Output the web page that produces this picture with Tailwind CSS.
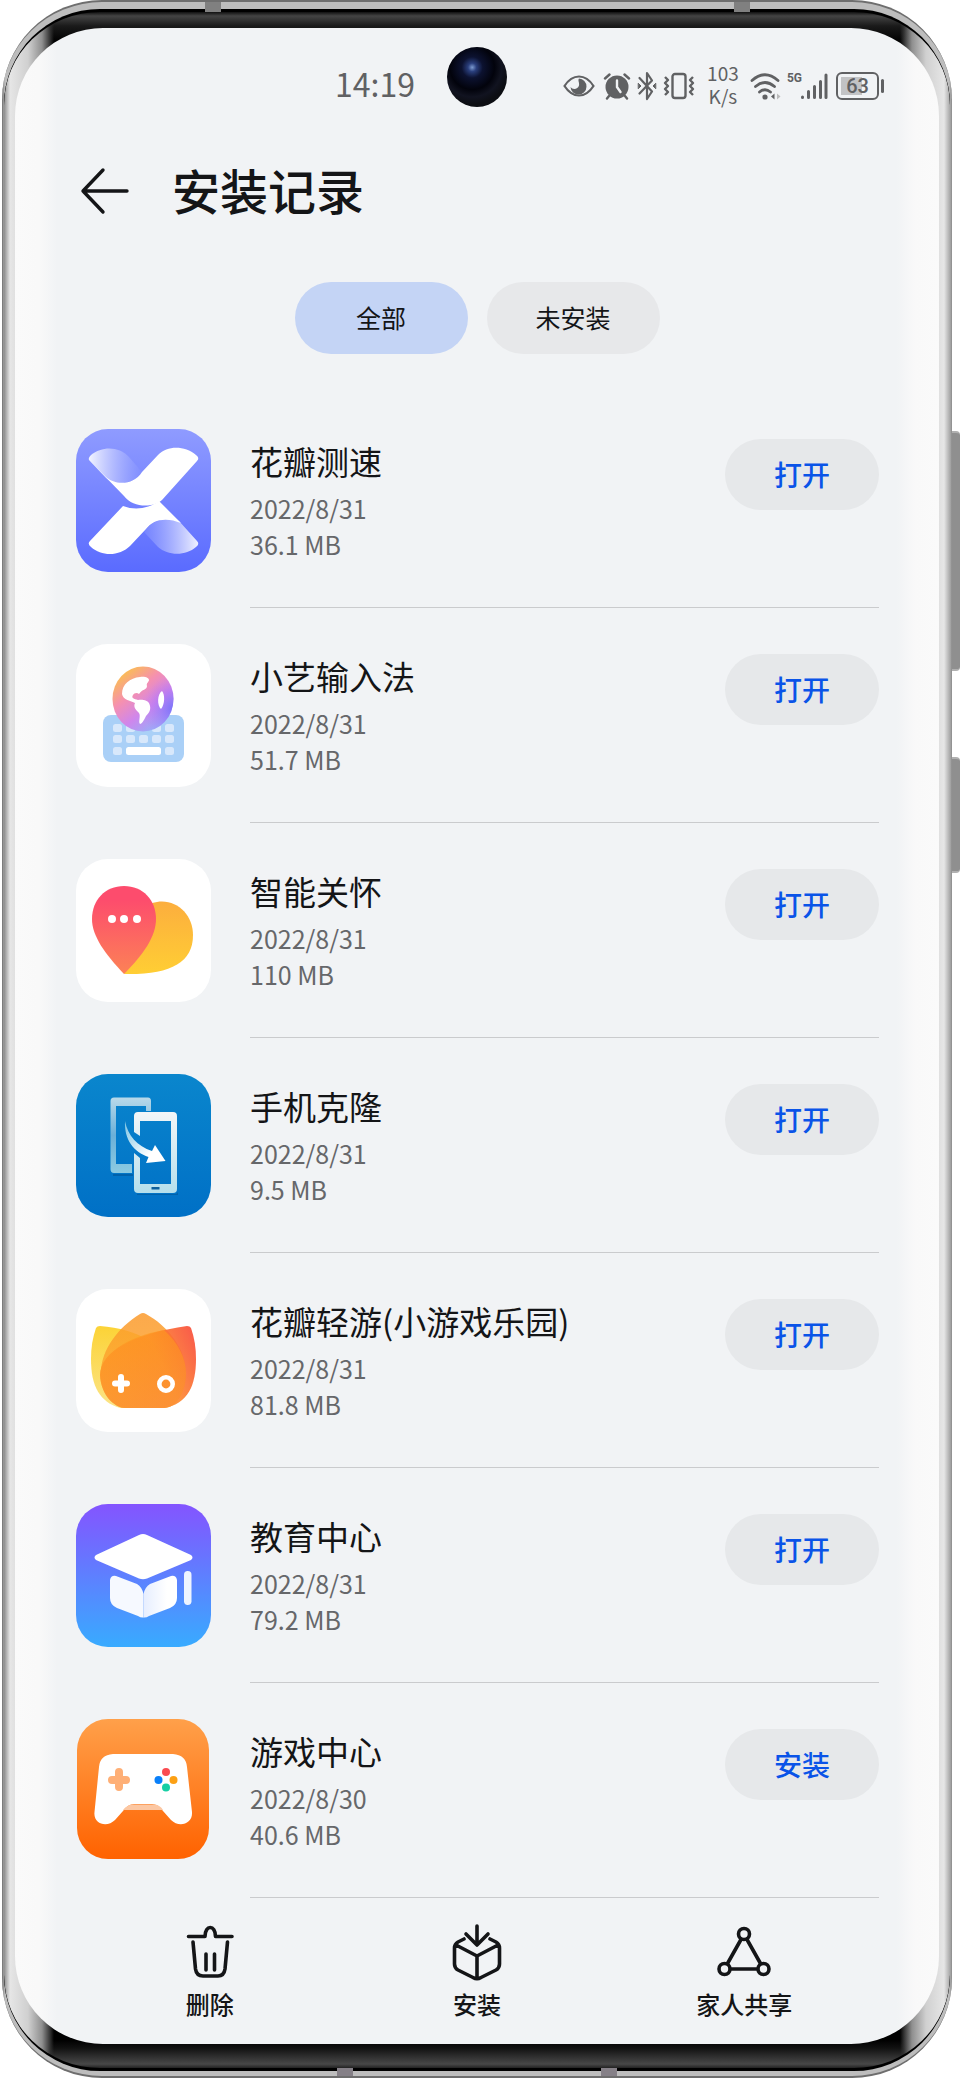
<!DOCTYPE html>
<html lang="zh-CN">
<head>
  <meta charset="utf-8" />
  <meta name="viewport" content="width=device-width, initial-scale=1" />
  <title>安装记录</title>
  <script src="https://cdn.jsdelivr.net/npm/@tailwindcss/browser@4"></script>
  <style>
    body {
      font-family: 'Noto Sans CJK SC', sans-serif;
    }
  </style>
</head>
<body class="bg-white text-[#141517]">

  <!-- Phone body -->
  <div class="relative ml-[2px] mr-[9px]">
    <!-- Side keys -->
    <div class="absolute top-[431px] -right-2 h-[240px] w-3 rounded-sm border-y-2 border-[#b0b0b0] bg-[#8f8f8f]"></div>
    <div class="absolute top-[757px] -right-2 h-[116px] w-3 rounded-sm border-y-2 border-[#b0b0b0] bg-[#8f8f8f]"></div>

    <div class="relative overflow-hidden rounded-[100px] border-y-2 border-[#6e6e6e] bg-[linear-gradient(to_right,#6f6f6f_0,#bdbdbd_3px,#bdbdbd_calc(100%-3px),#8a8a8a_100%)] px-[2px] pt-[7px] pb-[5px]">
      <!-- Antenna lines -->
      <div class="absolute top-0 left-[203px] h-2.5 w-4 bg-[#808080]"></div>
      <div class="absolute top-0 right-[202px] h-2.5 w-4 bg-[#808080]"></div>
      <div class="absolute bottom-0 left-[335px] h-2 w-4 bg-[#858087]"></div>
      <div class="absolute bottom-0 right-[335px] h-2 w-4 bg-[#858087]"></div>

      <div class="rounded-[96px] border-y-3 border-black bg-[linear-gradient(to_right,#8d8d8d_0,#e6e6e6_6px,#d0d0d0_24px,#8f8f8f_38px,#333_46px,transparent_50px,transparent_calc(100%-50px),#333_calc(100%-46px),#8f8f8f_calc(100%-38px),#d0d0d0_calc(100%-24px),#e6e6e6_calc(100%-6px),#a8a8a8_100%),linear-gradient(to_bottom,#111_0,#444_4px,#1a1a1a_14px,#000_30px,#000_calc(100%-28px),#111_calc(100%-20px),#484848_calc(100%-4px),#222_100%)] px-[11px] pt-[16px] pb-[24px]">

        <!-- Screen -->
        <div class="rounded-[88px] bg-[linear-gradient(to_right,#fafafa_0,#f9f9f9_24px,#f1f3f5_42px,#f1f3f5_calc(100%-42px),#f9f9f9_calc(100%-24px),#fafafa_100%)]">

          <!-- Status bar -->
          <div class="grid h-[116px] grid-cols-[1fr_60px_1fr] items-center text-[#606163]">
            <time class="pr-8 pb-1.5 text-right text-[32px] leading-10">14:19</time>
            <div class="mt-[19px] size-[60px] self-start rounded-full bg-[radial-gradient(circle_at_42%_34%,#7d9bd0_0,#2a3f7d_8%,#0c1230_20%,#02030c_42%,#111320_56%,#0c0d12_70%)]"></div>
            <div class="flex items-center justify-end pr-[55px]">
              <svg class="mr-2 h-6 w-8" viewBox="0 0 32 24" fill="none" stroke="currentColor" stroke-width="2.2">
                <path d="M1.500 12C6 5 11 2.500 16 2.500S26 5 30.500 12C26 19 21 21.500 16 21.500S6 19 1.500 12Z" />
                <path d="M16 4.500a8 8 0 1 1-8.500 8.500c2 3 7.500 2.500 8.500-1.500.7-3-1.500-5 0-7Z" fill="currentColor" stroke="none" />
              </svg>
              <svg class="mr-1.5 h-7 w-7" viewBox="0 0 28 28" fill="none" stroke="currentColor" stroke-width="2.400" stroke-linecap="round">
                <circle cx="14" cy="15" r="11.500" fill="currentColor" stroke="none" />
                <path d="M2 6.500 6.500 2.500M26 6.500l-4.500-4M6 24l-2 2.500M22 24l2 2.500" />
                <path d="M14 8.500V15l3.500 5" stroke="#f1f3f5" />
              </svg>
              <svg class="mr-1.5 h-[30px] w-5" viewBox="0 0 20 30" fill="none" stroke="currentColor" stroke-width="2.200" stroke-linejoin="round" stroke-linecap="round">
                <path d="M2.500 7 15 20.500 10 28V2l5 7.500L2.500 22.500" />
                <path d="M1.500 12.500 4 15l-2.500 2.500ZM18.500 12.500 16 15l2.500 2.500Z" fill="currentColor" stroke-width="1" />
              </svg>
              <svg class="mr-2.5 h-7 w-8" viewBox="0 0 32 28" fill="none" stroke="currentColor" stroke-width="2.400" stroke-linejoin="round">
                <rect x="9.500" y="2" width="13" height="24" rx="2.500" />
                <path d="m2 5 3 3-3 3 3 3-3 3 3 3-3 3M30 5l-3 3 3 3-3 3 3 3-3 3 3 3" />
              </svg>
              <div class="mr-2 w-9 pb-1 text-center text-[19px] leading-[23px]">
                <div>103</div>
                <div>K/s</div>
              </div>
              <svg class="mr-1.5 h-7 w-8" viewBox="0 0 32 28" fill="none" stroke="currentColor" stroke-width="2.800" stroke-linecap="round">
                <path d="M3 8.500Q16-3 29 8.500M6.500 14.500q9.500-8 19 0M10.500 20q5.500-4.500 11 0" />
                <circle cx="16" cy="25" r="2.600" fill="currentColor" stroke="none" />
                <path d="m25.500 21.500-3.500 3 3.500 3Z" fill="currentColor" stroke="none" />
                <path d="m28 21.500 3.500 3-3.500 3Z" fill="#bbb" stroke="none" />
              </svg>
              <span class="-mr-0.5 mb-4 font-[Roboto] text-[12px] leading-4 font-bold">5G</span>
              <svg class="mr-2 h-7 w-7" viewBox="0 0 28 28" stroke="currentColor" stroke-width="3" stroke-linecap="round">
                <path d="M2.500 25.500v-.5M8.500 25.500v-6M14.500 25.500v-11M20.500 25.500v-16M26 25.500V3" />
              </svg>
              <div class="mr-0.5 flex h-7 w-[43px] items-center justify-center rounded-md border-2 border-current bg-[linear-gradient(to_right,transparent_3px,#c2c3c5_3px,#c2c3c5_24px,transparent_24px)] bg-clip-content py-[3px] font-[Roboto] text-[20px] leading-none font-medium">63</div>
              <div class="h-3.5 w-[3px] rounded-sm bg-current"></div>
            </div>
          </div>

          <!-- Title -->
          <header class="flex h-[94px] items-center px-16">
            <button type="button" aria-label="返回" class="mr-[43px]">
              <svg class="h-12 w-[50px]" viewBox="0 0 50 48" fill="none" stroke="currentColor" stroke-width="3.400" stroke-linecap="round" stroke-linejoin="round">
                <path d="M48 24H4M24 3 4 24l20 21" />
              </svg>
            </button>
            <h1 class="pb-1 text-[48px] leading-[60px] font-medium">安装记录</h1>
          </header>

          <!-- Filter -->
          <div class="mt-11 mb-[39px] flex justify-center gap-[19px] text-[25px] leading-9">
            <button type="button" class="h-[72px] w-[173px] rounded-full bg-[#c4d4f5] pb-0.5">全部</button>
            <button type="button" class="h-[72px] w-[173px] rounded-full bg-[#e7e8ea] pb-0.5">未安装</button>
          </div>

          <!-- App list -->
          <ul class="pr-[60px] pl-[61px]">
            <li class="flex gap-[39px]">
              <svg class="mt-9 h-[143px] w-[135px] shrink-0 rounded-[32px]" viewBox="0 0 135 143">
                <defs>
                  <linearGradient id="speedBg" x2="0" y2="1"><stop stop-color="#8f9bff" /><stop offset="1" stop-color="#5a6bff" /></linearGradient>
                  <linearGradient id="speedFoldA"><stop stop-color="#fff" stop-opacity=".9" /><stop offset="1" stop-color="#8290ff" stop-opacity=".5" /></linearGradient>
                  <linearGradient id="speedFoldB"><stop stop-color="#8290ff" stop-opacity=".5" /><stop offset="1" stop-color="#fff" stop-opacity=".9" /></linearGradient>
                </defs>
                <path fill="url(#speedBg)" d="M0 0h135v143H0z" />
                <path fill="url(#speedFoldA)" d="M13 31Q12 29 15 26C26 17 43 17 53 28L66 43C58 56 38 57 30 49Z" />
                <path fill="#fff" d="M13 31 30 48C39 56 57 57 66 43L82 26C92 16 109 17 120 26Q124 29 121 32L86 71C77 79 57 79 48 67Z" />
                <path fill="url(#speedFoldB)" d="M68 103 82 118C92 127 110 127 120 118Q124 115 121 112L103 92C90 88 76 90 68 103Z" />
                <path fill="#fff" d="M47 77C60 82 73 79 83 72L105 94C91 88 77 90 70 100L54 117C44 127 26 128 15 118Q11 115 14 112Z" />
              </svg>
              <div class="flex h-[215px] flex-1 items-start justify-between border-b border-[#cacbcd]">
                <div class="pt-[45px]">
                  <h2 class="mb-1.5 text-[33px] leading-[46px]">花瓣测速</h2>
                  <p class="text-[25px] leading-9 text-[#66676a]">2022/8/31</p>
                  <p class="text-[25px] leading-9 text-[#66676a]">36.1 MB</p>
                </div>
                <button type="button" class="mt-[46px] h-[71px] w-[154px] rounded-full bg-[#e6e8ea] pb-0.5 text-[28px] leading-10 font-medium text-[#0a54e8]">打开</button>
              </div>
            </li>

            <li class="flex gap-[39px]">
              <svg class="mt-9 h-[143px] w-[135px] shrink-0 rounded-[32px]" viewBox="0 0 135 143">
                <defs>
                  <linearGradient id="globeBase" x1=".1" y1=".1" x2=".75" y2="1"><stop stop-color="#fbc24a" /><stop offset=".35" stop-color="#f590b0" /><stop offset=".65" stop-color="#cf86ec" /><stop offset="1" stop-color="#8fb4fb" /></linearGradient>
                  <radialGradient id="globeEdge" cx="1" cy=".65" r=".5"><stop stop-color="#7a72fa" /><stop offset="1" stop-color="#c06ff5" stop-opacity="0" /></radialGradient>
                </defs>
                <path fill="#fff" d="M0 0h135v143H0z" />
                <rect x="27" y="71" width="81" height="47" rx="8" fill="#aad0f7" />
                <g fill="#d8e8fb">
                  <rect x="37" y="80" width="9" height="8" rx="2.500" /><rect x="50" y="80" width="9" height="8" rx="2.500" /><rect x="76" y="80" width="9" height="8" rx="2.500" /><rect x="89" y="80" width="9" height="8" rx="2.500" />
                  <rect x="37" y="91" width="9" height="8" rx="2.500" /><rect x="50" y="91" width="9" height="8" rx="2.500" /><rect x="63" y="91" width="9" height="8" rx="2.500" /><rect x="76" y="91" width="9" height="8" rx="2.500" /><rect x="89" y="91" width="9" height="8" rx="2.500" />
                  <rect x="37" y="103" width="9" height="8" rx="2.500" /><rect x="89" y="103" width="9" height="8" rx="2.500" />
                </g>
                <rect x="50" y="103" width="35" height="8" rx="2.500" fill="#fff" />
                <ellipse cx="67" cy="55" rx="30.500" ry="32.500" fill="url(#globeBase)" />
                <ellipse cx="67" cy="55" rx="30.500" ry="32.500" fill="url(#globeEdge)" />
                <path fill="#fff" d="M46 50C46 40 54 34 64 33C69 32 73 34 73 36C73 38 70 39 71 42C71 46 66 45 63 50C61 48 58 49 57 51C55 54 58 55 62 56C67 55 72 57 73 59C76 65 73 69 70 72C68 76 66 80 64 80C62 78 65 72 63 69C60 66 57 63 59 59C55 57 47 56 46 50Z" />
                <path fill="#fff" d="M86 47C89 50 89 60 85 65C81 62 81 50 86 47Z" />
              </svg>
              <div class="flex h-[215px] flex-1 items-start justify-between border-b border-[#cacbcd]">
                <div class="pt-[45px]">
                  <h2 class="mb-1.5 text-[33px] leading-[46px]">小艺输入法</h2>
                  <p class="text-[25px] leading-9 text-[#66676a]">2022/8/31</p>
                  <p class="text-[25px] leading-9 text-[#66676a]">51.7 MB</p>
                </div>
                <button type="button" class="mt-[46px] h-[71px] w-[154px] rounded-full bg-[#e6e8ea] pb-0.5 text-[28px] leading-10 font-medium text-[#0a54e8]">打开</button>
              </div>
            </li>

            <li class="flex gap-[39px]">
              <svg class="mt-9 h-[143px] w-[135px] shrink-0 rounded-[32px]" viewBox="0 0 135 143">
                <defs>
                  <linearGradient id="carePin" x2="0" y2="1"><stop offset=".15" stop-color="#fd4c6d" /><stop offset="1" stop-color="#fc8256" /></linearGradient>
                  <linearGradient id="careLeaf" x2="0" y2="1"><stop stop-color="#fcae3e" /><stop offset="1" stop-color="#ffce34" /></linearGradient>
                </defs>
                <path fill="#fff" d="M0 0h135v143H0z" />
                <path fill="url(#careLeaf)" d="M76 44C98 37 117 54 117 76C117 104 94 116 48 115Z" />
                <path fill="url(#carePin)" d="M48 27C67 27 80 41 80 60C80 77 68 95 48 115C29 95 16 77 16 60C16 41 29 27 48 27Z" />
                <g fill="#fff"><circle cx="36" cy="60" r="4" /><circle cx="48" cy="60" r="4" /><circle cx="61" cy="60" r="4" /></g>
              </svg>
              <div class="flex h-[215px] flex-1 items-start justify-between border-b border-[#cacbcd]">
                <div class="pt-[45px]">
                  <h2 class="mb-1.5 text-[33px] leading-[46px]">智能关怀</h2>
                  <p class="text-[25px] leading-9 text-[#66676a]">2022/8/31</p>
                  <p class="text-[25px] leading-9 text-[#66676a]">110 MB</p>
                </div>
                <button type="button" class="mt-[46px] h-[71px] w-[154px] rounded-full bg-[#e6e8ea] pb-0.5 text-[28px] leading-10 font-medium text-[#0a54e8]">打开</button>
              </div>
            </li>

            <li class="flex gap-[39px]">
              <svg class="mt-9 h-[143px] w-[135px] shrink-0 rounded-[32px]" viewBox="0 0 135 143">
                <defs>
                  <linearGradient id="cloneBg" x2="0" y2="1"><stop stop-color="#0a86cd" /><stop offset="1" stop-color="#0070c6" /></linearGradient>
                  <linearGradient id="cloneBack" x2="0" y2="1"><stop stop-color="#b9d9ea" /><stop offset=".5" stop-color="#6bb0d8" /><stop offset="1" stop-color="#8ccbe2" /></linearGradient>
                  <linearGradient id="cloneFront" x2="0" y2="1"><stop stop-color="#f3f6f8" /><stop offset="1" stop-color="#b5dfec" /></linearGradient>
                  <linearGradient id="cloneArrow" x2="1" y2="1"><stop stop-color="#7cc4e4" /><stop offset=".7" stop-color="#fff" /></linearGradient>
                </defs>
                <path fill="url(#cloneBg)" d="M0 0h135v143H0z" />
                <path fill="#00457f" opacity=".4" d="M37 100h20v2H37zM61 120h38q3 0 3-3v4h-41z" />
                <path fill="url(#cloneBack)" d="M38 23.500H72Q75 23.500 75 27V37H70V32H40V90H56V99H38Q34.500 99 34.500 95V27Q34.500 23.500 38 23.500Z" />
                <path fill="url(#cloneFront)" fill-rule="evenodd" d="M62 38H97Q101 38 101 42V115Q101 119 97 119H62Q58 119 58 115V79L64 84V110H95V47H64V62L58 58V42Q58 38 62 38Z" />
                <path fill="#0d5f9c" d="M75.500 113h8v2.500h-8z" />
                <path fill="url(#cloneArrow)" d="M49 47C52 62 61 72 76 77L79 71 89.500 87 70 89 72.500 83C58 78 48 66 49 47Z" />
              </svg>
              <div class="flex h-[215px] flex-1 items-start justify-between border-b border-[#cacbcd]">
                <div class="pt-[45px]">
                  <h2 class="mb-1.5 text-[33px] leading-[46px]">手机克隆</h2>
                  <p class="text-[25px] leading-9 text-[#66676a]">2022/8/31</p>
                  <p class="text-[25px] leading-9 text-[#66676a]">9.5 MB</p>
                </div>
                <button type="button" class="mt-[46px] h-[71px] w-[154px] rounded-full bg-[#e6e8ea] pb-0.5 text-[28px] leading-10 font-medium text-[#0a54e8]">打开</button>
              </div>
            </li>

            <li class="flex gap-[39px]">
              <svg class="mt-9 h-[143px] w-[135px] shrink-0 rounded-[32px]" viewBox="0 0 135 143">
                <defs>
                  <linearGradient id="petalL" x2="0" y2="1"><stop stop-color="#fcd336" /><stop offset="1" stop-color="#fbe488" /></linearGradient>
                  <linearGradient id="petalR" x1="1" x2="0" y1=".2" y2=".6"><stop stop-color="#f9523a" /><stop offset=".4" stop-color="#fd8a30" /><stop offset="1" stop-color="#fe9c28" /></linearGradient>
                  <linearGradient id="petalM" x2="0" y2="1"><stop stop-color="#fb9a2c" /><stop offset="1" stop-color="#fdae30" /></linearGradient>
                  <linearGradient id="petalMix" x2="0" y2="1"><stop stop-color="#fe9a1c" /><stop offset="1" stop-color="#fb9238" /></linearGradient>
                </defs>
                <path fill="#fff" d="M0 0h135v143H0z" />
                <path fill="url(#petalL)" d="M20 39Q21 37 24 37C62 40 92 56 100 88L70 119H44C24 113 15 98 15 70Q15 53 20 39Z" />
                <path fill="url(#petalM)" fill-opacity=".85" d="M64 25Q67 23 70 25C92 37 110 60 110 84C110 103 100 119 88 119H48C36 117 24 102 25 84C25 60 43 38 64 25Z" />
                <path fill="url(#petalR)" fill-opacity=".92" d="M115 39Q114 37 111 37C60 44 24 62 24 86C25 106 38 119 50 119H88C112 115 120 96 120 70Q120 53 115 39Z" />
                <path fill="url(#petalMix)" fill-opacity=".6" d="M24 86C25 66 49 48 88 41C102 54 110 69 110 84C110 103 100 119 88 119H50C38 119 25 106 24 86Z" />
                <path stroke="#fff" stroke-width="6" stroke-linecap="round" d="M39 94.500H51M45 88v13" />
                <circle cx="90" cy="95" r="6.700" fill="none" stroke="#fff" stroke-width="4.600" />
              </svg>
              <div class="flex h-[215px] flex-1 items-start justify-between border-b border-[#cacbcd]">
                <div class="pt-[45px]">
                  <h2 class="mb-1.5 text-[33px] leading-[46px]">花瓣轻游(小游戏乐园)</h2>
                  <p class="text-[25px] leading-9 text-[#66676a]">2022/8/31</p>
                  <p class="text-[25px] leading-9 text-[#66676a]">81.8 MB</p>
                </div>
                <button type="button" class="mt-[46px] h-[71px] w-[154px] rounded-full bg-[#e6e8ea] pb-0.5 text-[28px] leading-10 font-medium text-[#0a54e8]">打开</button>
              </div>
            </li>

            <li class="flex gap-[39px]">
              <svg class="mt-9 h-[143px] w-[135px] shrink-0 rounded-[32px]" viewBox="0 0 135 143">
                <defs>
                  <linearGradient id="eduBg" x2="0" y2="1"><stop stop-color="#8454ff" /><stop offset="1" stop-color="#38abff" /></linearGradient>
                  <linearGradient id="eduBook"><stop stop-color="#e6eeff" /><stop offset=".7" stop-color="#fff" /></linearGradient>
                </defs>
                <path fill="url(#eduBg)" d="M0 0h135v143H0z" />
                <path fill="#fff" d="M63 31Q67 29 71 31L115 51Q118 53.500 115 56L71 74.500Q67 76 63 74.500L20 56Q17 53.500 20 51Z" />
                <path fill="#f6f9ff" d="M34 76Q35 71 40 72L61 80Q66 83 67.500 90V113.500Q65 114 62 112L41 104Q34 101 34 94Z" />
                <path fill="url(#eduBook)" d="M101 76Q100 71 95 72L74 80Q69 83 67.500 90V113.500Q70 114 73 112L94 104Q101 101 101 94Z" />
                <rect x="108" y="67" width="7.500" height="34" rx="3.700" fill="#eef4ff" />
              </svg>
              <div class="flex h-[215px] flex-1 items-start justify-between border-b border-[#cacbcd]">
                <div class="pt-[45px]">
                  <h2 class="mb-1.5 text-[33px] leading-[46px]">教育中心</h2>
                  <p class="text-[25px] leading-9 text-[#66676a]">2022/8/31</p>
                  <p class="text-[25px] leading-9 text-[#66676a]">79.2 MB</p>
                </div>
                <button type="button" class="mt-[46px] h-[71px] w-[154px] rounded-full bg-[#e6e8ea] pb-0.5 text-[28px] leading-10 font-medium text-[#0a54e8]">打开</button>
              </div>
            </li>

            <li class="flex gap-[39px]">
              <svg class="mt-9 h-[143px] w-[135px] shrink-0" viewBox="0 0 135 143">
                <defs>
                  <linearGradient id="gameBg" x2="0" y2="1"><stop stop-color="#ffa04a" /><stop offset="1" stop-color="#ff6200" /></linearGradient>
                </defs>
                <rect x="1" width="132" height="140" rx="31" fill="url(#gameBg)" />
                <path fill="#fff" d="M37 35H97Q110 36 111 48L116 93C117 105 103 109 95 101L87 92Q82 85 76 85H58Q52 85 47 92L39 101C31 109 17 105 18.500 93L23 48Q24 36 37 35Z" />
                <path fill="#fcc7a2" d="M56 85.500H79Q84 86 87 91H47Q51 86 56 85.500Z" />
                <path stroke="#feaf76" stroke-width="8" stroke-linecap="round" d="M36 61H50M43 53v15" />
                <circle cx="90" cy="53" r="4" fill="#fa4b50" /><circle cx="82.500" cy="61" r="4" fill="#0a80fa" /><circle cx="97.500" cy="61" r="4" fill="#fca014" /><circle cx="90" cy="68.500" r="4" fill="#17cfa4" />
              </svg>
              <div class="flex h-[215px] flex-1 items-start justify-between border-b border-[#cacbcd]">
                <div class="pt-[45px]">
                  <h2 class="mb-1.5 text-[33px] leading-[46px]">游戏中心</h2>
                  <p class="text-[25px] leading-9 text-[#66676a]">2022/8/30</p>
                  <p class="text-[25px] leading-9 text-[#66676a]">40.6 MB</p>
                </div>
                <button type="button" class="mt-[46px] h-[71px] w-[154px] rounded-full bg-[#e6e8ea] pb-0.5 text-[28px] leading-10 font-medium text-[#0a54e8]">安装</button>
              </div>
            </li>
          </ul>

          <!-- Bottom actions -->
          <nav class="grid h-[146px] grid-cols-3 px-[61px] pt-6 text-[24px] leading-8 font-medium">
            <button type="button" class="flex flex-col items-center gap-1.5">
              <svg class="h-[60px] w-14" viewBox="0 0 56 60" fill="none" stroke="currentColor" stroke-width="3.600" stroke-linecap="round" stroke-linejoin="round">
                <path d="M6.500 14.500H23C23 2.500 33.500 2.500 33.500 14.500H50" />
                <path d="M11 20 13.500 47Q14.500 54 21 54H36Q42 54 43 47L45.500 20M24 32V48M32.500 32V48" />
              </svg>
              <span>删除</span>
            </button>
            <button type="button" class="flex flex-col items-center gap-1.5">
              <svg class="h-[60px] w-14" viewBox="0 0 56 60" fill="none" stroke="currentColor" stroke-width="3.600" stroke-linecap="round" stroke-linejoin="round">
                <path d="M28 4V22M17 12 28 23 39 12" />
                <path d="M15 17 9 20Q5.500 22 5.500 26V42Q5.500 46 9 48L24 55.500Q28 58 32 55.500L47 48Q50.500 46 50.500 42V26Q50.500 22 47 20L41 17M7 23 28 34 49 23M28 34V56" />
              </svg>
              <span>安装</span>
            </button>
            <button type="button" class="flex flex-col items-center gap-1.5">
              <svg class="h-[60px] w-14" viewBox="0 0 56 60" fill="none" stroke="currentColor" stroke-width="3.600" stroke-linecap="round">
                <circle cx="28" cy="12" r="5.500" /><circle cx="8.500" cy="47" r="5.500" /><circle cx="47.500" cy="47" r="5.500" />
                <path d="M25 17.500 11.500 41.500M31 17.500 44.500 41.500M15 47H41" />
              </svg>
              <span>家人共享</span>
            </button>
          </nav>
        </div>
      </div>
    </div>
  </div>

</body>
</html>
